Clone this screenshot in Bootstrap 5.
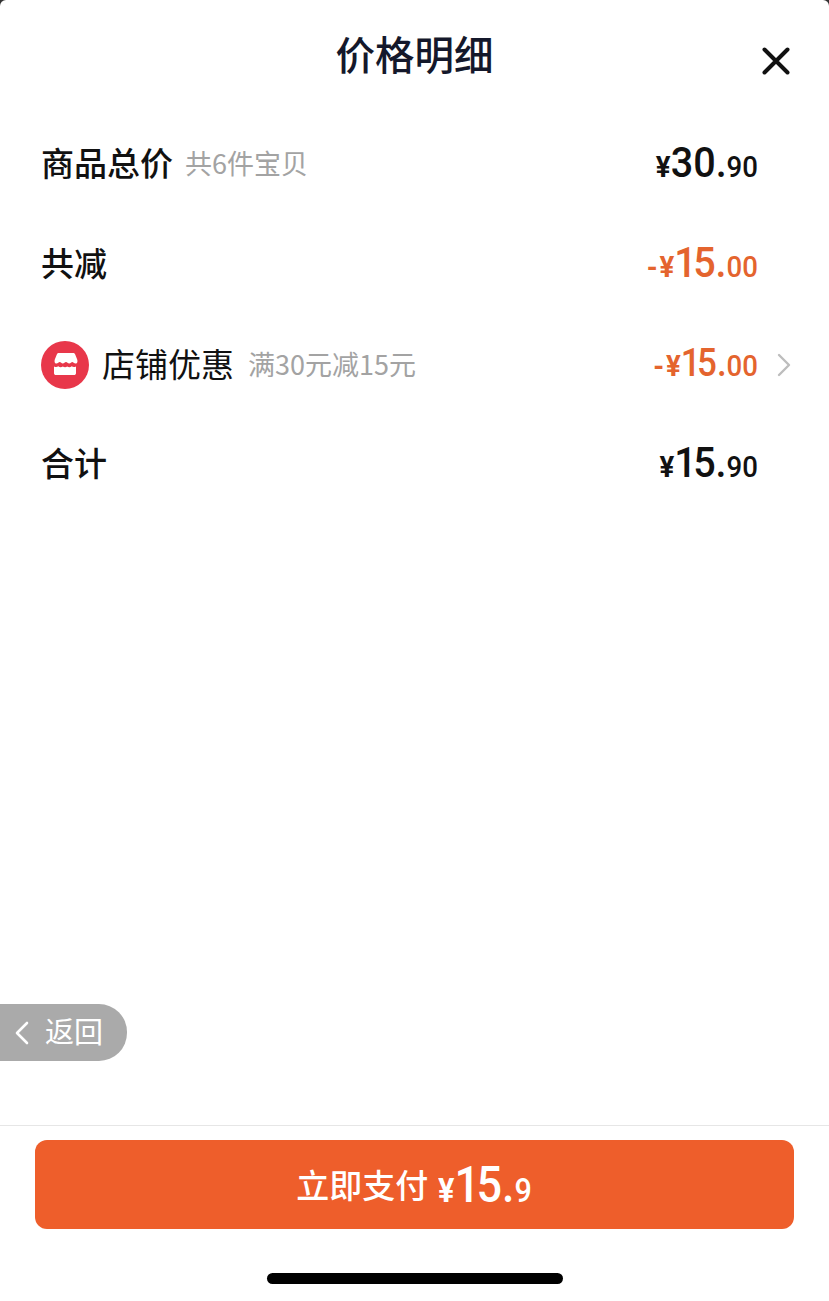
<!DOCTYPE html>
<html lang="zh-CN">
<head>
    <meta charset="UTF-8">
    <title>价格明细</title>
    <meta name="viewport" content="width=device-width, initial-scale=1">
    <link href="https://cdn.jsdelivr.net/npm/bootstrap@5.3.2/dist/css/bootstrap.min.css" rel="stylesheet">
    <script src="https://cdn.jsdelivr.net/npm/bootstrap@5.3.2/dist/js/bootstrap.bundle.min.js"></script>
    <style>
        html, body {
            height: 1301px;
            background-color: #333;
            overflow: hidden;
        }
        body {
            font-family: "Noto Sans CJK SC", "Liberation Sans", sans-serif;
            color: #111;
        }
        .sheet {
            height: 1301px;
            background-color: #fff;
            border-radius: 6px 6px 0 0;
        }
        .sheet-head {
            height: 115px;
            padding-bottom: 10px;
        }
        .sheet-title {
            font-size: 39.500px;
            font-weight: 500;
            line-height: 1;
            color: #14182b;
            margin: 0;
        }
        .close-btn {
            right: 38px;
            top: 46px;
            width: 30px;
            height: 30px;
        }
        .price-rows {
            padding: 0 38px 0 41px;
        }
        .price-row {
            height: 100px;
            padding-bottom: 5px;
        }
        .price-row-shop {
            padding-bottom: 1px;
        }
        .price-row-shop .row-name,
        .price-row-shop .row-note {
            margin-bottom: 2px;
        }
        .price-row-shop .amount {
            margin-bottom: 4px;
        }
        .row-name {
            font-size: 33px;
            font-weight: 500;
            line-height: 1;
        }
        .row-name-light {
            font-weight: 400;
        }
        .row-note {
            font-size: 27px;
            line-height: 1;
            color: #a3a3a3;
            margin-left: 14px;
        }
        .row-note-tight {
            margin-left: 12px;
        }
        .shop-icon {
            width: 48px;
            height: 48px;
            margin-right: 13px;
        }
        .amount {
            font-family: "Roboto", sans-serif;
            font-weight: 500;
            line-height: 1;
            width: 136px;
            margin-right: 33px;
            text-align: right;
            white-space: nowrap;
            transform: scaleX(.92);
            transform-origin: right center;
        }
        .amount-off {
            color: #e4642e;
        }
        .amount-sm { font-size: 30px; font-weight: 700; }
        .amount-lg { font-size: 43px; }
        .amount-md { font-size: 38px; }
        .amount-cents { font-size: 30px; }
        .digit-one { letter-spacing: -4px; }
        .dash { letter-spacing: 2px; }
        .chevron {
            width: 14px;
            height: 24px;
            margin-left: 19px;
        }
        .row-arrow .amount {
            margin-right: 0;
        }
        .back-pill {
            left: 0;
            top: 1004px;
            width: 127px;
            height: 57px;
            background-color: #aaa;
            border-radius: 0 28px 28px 0;
            color: #fff;
            font-size: 29px;
            line-height: 1;
            padding: 0 0 4px 15px;
        }
        .back-pill svg {
            width: 14px;
            height: 24px;
            margin: 4px 16px 0 0;
        }
        .sheet-foot {
            left: 0;
            right: 0;
            top: 1125px;
            height: 176px;
            border-top: 1px solid #e6e6e6;
            padding: 14px 35px 0;
        }
        .pay-btn {
            width: 100%;
            height: 89px;
            background-color: #ee5e2b;
            border: 0;
            border-radius: 12px;
            color: #fff;
            font-size: 33px;
            font-weight: 500;
        }
        .pay-btn:hover {
            background-color: #ee5e2b;
            color: #fff;
        }
        .pay-num {
            display: inline-block;
            font-family: "Roboto", sans-serif;
            font-weight: 500;
            line-height: 1;
            margin: 0 -10px 0 10px;
            transform: scaleX(.9);
            transform-origin: left center;
        }
        .pay-num .amount-lg { font-size: 50px; }
        .pay-num .amount-cents { font-size: 34px; }
        .pay-num .amount-sm { font-size: 34px; }
        .home-bar {
            width: 296px;
            height: 11px;
            background-color: #000;
            border-radius: 6px;
            margin: 44px auto 0;
        }
    </style>
</head>
<body>
    <div class="sheet position-relative">
        <div class="sheet-head d-flex align-items-center justify-content-center">
            <h1 class="sheet-title">价格明细</h1>
        </div>
        <svg class="close-btn position-absolute" viewBox="0 0 30 30" fill="none" stroke="#111" stroke-width="4" stroke-linecap="round">
            <path d="M3.500 3.500 L26.500 26.500 M26.500 3.500 L3.500 26.500"/>
        </svg>

        <div class="price-rows">
            <div class="price-row d-flex align-items-center justify-content-between">
                <div class="d-flex align-items-center">
                    <span class="row-name">商品总价</span>
                    <span class="row-note row-note-tight">共6件宝贝</span>
                </div>
                <div class="amount"><span class="amount-sm">¥</span><span class="amount-lg">30.</span><span class="amount-cents">90</span></div>
            </div>
            <div class="price-row d-flex align-items-center justify-content-between">
                <span class="row-name">共减</span>
                <div class="amount amount-off"><span class="amount-sm"><span class="dash">-</span>¥</span><span class="amount-lg"><span class="digit-one">1</span>5.</span><span class="amount-cents">00</span></div>
            </div>
            <div class="price-row price-row-shop d-flex align-items-center justify-content-between">
                <div class="d-flex align-items-center">
                    <svg class="shop-icon" viewBox="0 0 48 48">
                        <circle cx="24" cy="24" r="24" fill="#e8374a"/>
                        <path d="M16 12h16c1 0 1.700.5 2.200 1.400l2 5c.5 1.500.3 3.600-1 4.100-1.800.6-3-1.500-3.900-1.500s-1.800 1.600-3.100 1.600-2.100-1.600-3.200-1.600-2 1.600-3.200 1.600-2-1.600-3.100-1.600-2.100 2.100-3.900 1.500c-1.300-.5-1.500-2.600-1-4.100l2-5c.5-.9 1.200-1.400 2.200-1.400z" fill="#fff"/>
                        <path d="M13 25.500c1.600.8 3 .9 4.300-.2 1.300 1.100 3.300 1.100 4.500.1 1.300 1 3.200 1 4.400 0 1.300 1 3.200 1 4.500-.1 1.300 1.100 2.700 1 4.300.2V32c0 1.400-.8 2-2 2H15c-1.200 0-2-.6-2-2z" fill="#fff"/>
                    </svg>
                    <span class="row-name row-name-light">店铺优惠</span>
                    <span class="row-note">满30元减15元</span>
                </div>
                <div class="d-flex align-items-center row-arrow">
                    <div class="amount amount-off"><span class="amount-sm"><span class="dash">-</span>¥</span><span class="amount-md"><span class="digit-one">1</span>5.</span><span class="amount-cents">00</span></div>
                    <svg class="chevron" viewBox="0 0 14 24" fill="none" stroke="#bdbdbd" stroke-width="2.400" stroke-linecap="round" stroke-linejoin="round">
                        <path d="M2 2 L12 12 L2 22"/>
                    </svg>
                </div>
            </div>
            <div class="price-row d-flex align-items-center justify-content-between">
                <span class="row-name">合计</span>
                <div class="amount"><span class="amount-sm">¥</span><span class="amount-lg"><span class="digit-one">1</span>5.</span><span class="amount-cents">90</span></div>
            </div>
        </div>

        <div class="back-pill position-absolute d-flex align-items-center">
            <svg viewBox="0 0 14 24" fill="none" stroke="#fff" stroke-width="2.600" stroke-linecap="round" stroke-linejoin="round">
                <path d="M12 2 L2 12 L12 22"/>
            </svg>
            <span>返回</span>
        </div>

        <div class="sheet-foot position-absolute bg-white">
            <button type="button" class="btn pay-btn d-flex align-items-center justify-content-center">
                <span>立即支付</span>
                <span class="pay-num"><span class="amount-sm">¥</span><span class="amount-lg"><span class="digit-one">1</span>5.</span><span class="amount-cents">9</span></span>
            </button>
            <div class="home-bar"></div>
        </div>
    </div>
</body>
</html>
